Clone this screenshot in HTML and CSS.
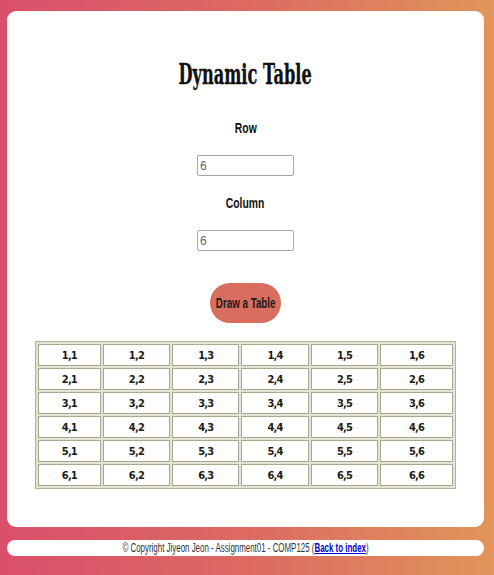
FILE: index.html
```html
<!DOCTYPE html>
<html lang="en">
<head>
<meta charset="utf-8">
<title>Dynamic Table</title>
<link rel="stylesheet" href="styles.css">
</head>
<body>
<main class="card">
  <h1 class="title"><span class="sq sq-title">Dynamic Table</span></h1>
  <label class="field-label" for="rows"><span class="sq sq-label">Row</span></label>
  <input class="num-input" id="rows" type="text" value="6">
  <label class="field-label" for="cols"><span class="sq sq-label">Column</span></label>
  <input class="num-input" id="cols" type="text" value="6">
  <button class="draw-btn" type="button"><span class="sq sq-btn">Draw a Table</span></button>
  <table class="grid">
    <tbody>
      <tr><td>1,1</td><td>1,2</td><td>1,3</td><td>1,4</td><td>1,5</td><td>1,6</td></tr>
      <tr><td>2,1</td><td>2,2</td><td>2,3</td><td>2,4</td><td>2,5</td><td>2,6</td></tr>
      <tr><td>3,1</td><td>3,2</td><td>3,3</td><td>3,4</td><td>3,5</td><td>3,6</td></tr>
      <tr><td>4,1</td><td>4,2</td><td>4,3</td><td>4,4</td><td>4,5</td><td>4,6</td></tr>
      <tr><td>5,1</td><td>5,2</td><td>5,3</td><td>5,4</td><td>5,5</td><td>5,6</td></tr>
      <tr><td>6,1</td><td>6,2</td><td>6,3</td><td>6,4</td><td>6,5</td><td>6,6</td></tr>
    </tbody>
  </table>
</main>
<footer class="footer">
  <span class="sq sq-foot">© Copyright Jiyeon Jeon - Assignment01 - COMP125 (<a class="back" href="#">Back to index</a>)</span>
</footer>
</body>
</html>
```
FILE: styles.css
```css
html, body {
  margin: 0;
  padding: 0;
}
body {
  width: 494px;
  height: 575px;
  box-sizing: border-box;
  padding: 11px 10px 0 7px;
  background: linear-gradient(to right, #da4f6b 0%, #dc6a62 50%, #e0955a 100%);
  font-family: "Liberation Sans", Arial, sans-serif;
  overflow: hidden;
}
.card {
  height: 516px;
  box-sizing: border-box;
  background: #fff;
  border-radius: 9px;
  padding-top: 49px;
  display: flex;
  flex-direction: column;
  align-items: center;
}
.sq {
  display: inline-block;
  white-space: nowrap;
  transform-origin: center center;
}
.title {
  margin: 0;
  height: 30px;
  line-height: 30px;
  font-family: "DejaVu Serif", serif;
  font-weight: bold;
  font-size: 27px;
  color: #111;
  text-align: center;
  display: flex;
  justify-content: center;
  width: 300px;
  -webkit-text-stroke: 0.4px #111;
}
.sq-title { transform: scaleX(0.6); }
.field-label {
  display: block;
  height: 20px;
  line-height: 20px;
  font-weight: bold;
  font-size: 14px;
  color: #111;
  margin-top: 28px;
}
.sq-label { transform: scaleX(0.74); }
.num-input + .field-label { margin-top: 17px; }
.num-input {
  margin-top: 17px;
  width: 97px;
  height: 21px;
  box-sizing: border-box;
  border: 1px solid #a6a6a6;
  border-radius: 2px;
  padding: 0 2px;
  font-family: "Liberation Sans Narrow", "Liberation Sans", Arial, sans-serif;
  font-size: 12px;
  color: #666;
  background: #fff;
}
.draw-btn {
  margin-top: 32px;
  width: 71px;
  height: 40px;
  border: none;
  border-radius: 20px;
  background: #d96e5f;
  font-family: "Liberation Sans", Arial, sans-serif;
  font-weight: bold;
  font-size: 14px;
  color: #1a1a1a;
  padding: 0;
  white-space: nowrap;
  display: flex;
  justify-content: center;
  align-items: center;
  overflow: visible;
}
.sq-btn { transform: scaleX(0.7); }
.grid {
  margin-top: 18px;
  width: 421px;
  table-layout: fixed;
  border: 1px solid #b3b39a;
  border-spacing: 2px;
  background: #e4e4d6;
}
.grid td {
  height: 20px;
  padding: 0;
  border: 1px solid #a9a98f;
  background: #fff;
  text-align: center;
  font-family: "DejaVu Sans Condensed", "DejaVu Sans", sans-serif;
  font-weight: bold;
  font-size: 11px;
  letter-spacing: -0.8px;
  color: #1a1a1a;
}
.grid td:first-child { width: 15%; }
.grid td:last-child { width: 17.5%; }
.footer {
  margin-top: 13px;
  height: 16px;
  background: #fff;
  border-radius: 8px;
  line-height: 16px;
  font-size: 12px;
  color: #333;
  display: flex;
  justify-content: center;
}
.sq-foot { transform: scaleX(0.66); }
.back {
  color: #0000cc;
  font-weight: bold;
  text-decoration: underline;
}
```
